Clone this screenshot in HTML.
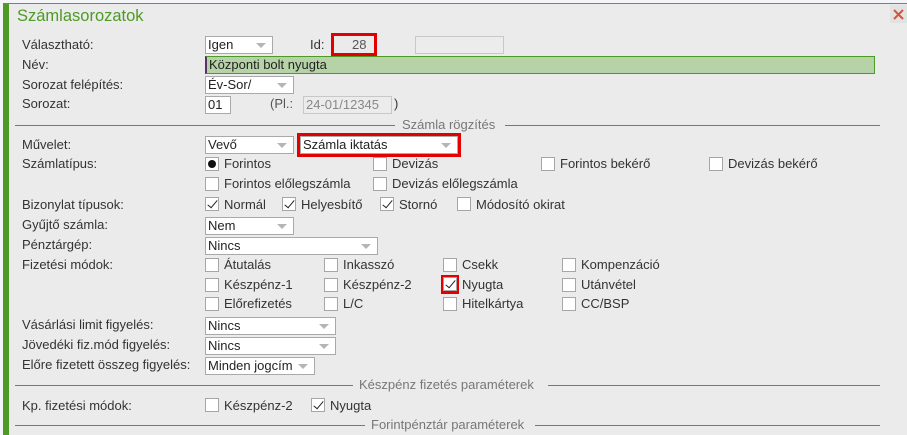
<!DOCTYPE html>
<html><head><meta charset="utf-8"><style>
*{margin:0;padding:0;box-sizing:border-box}
body{width:907px;height:435px;overflow:hidden;background:#f3f5f8;font-family:"Liberation Sans",sans-serif;font-size:13px;color:#333;position:relative}
#p{position:absolute;left:3px;top:3px;width:904px;height:432px;background:#ebebeb;border-top:1px solid #5a9e32;border-left:6px solid #4e9a26}
.a{position:absolute;white-space:nowrap}
.sel,.inp{position:absolute;background:#fff;border:1px solid #a9a9a9;line-height:16px;padding-left:2px;font-size:13px;color:#222;white-space:nowrap}
.sel:after{content:"";position:absolute;right:6px;top:6px;border-left:5px solid transparent;border-right:5px solid transparent;border-top:5px solid #b5b5b5}
.cb{position:absolute;width:14px;height:14px;background:#fff;border:1px solid #a6a6a6}
.cb.c:after{content:"";position:absolute;left:4px;top:0px;width:4px;height:9px;border-right:1.5px solid #222;border-bottom:1.5px solid #222;transform:rotate(40deg)}
.lbl{position:absolute;line-height:14px;font-size:13px;color:#333;white-space:nowrap}
.hr{position:absolute;height:1px;background:#777}
.sep{position:absolute;color:#777;font-size:13px;line-height:14px;white-space:nowrap}
.red{position:absolute;border:3px solid #e30000}
</style></head><body>
<div id="p"></div>
<div class="a" style="left:17px;top:6px;font-size:16.5px;color:#4e9a26;line-height:20px">Számlasorozatok</div>
<div class="a" style="left:890px;top:5px;width:17px;height:18px;background:#e2e2e2"></div>
<svg class="a" style="left:893px;top:9px" width="11" height="11"><path d="M1 1L10 10M10 1L1 10" stroke="#d9533a" stroke-width="2"/></svg>

<div class="lbl" style="left:22px;top:38px">Választható:</div>
<div class="sel" style="left:205px;top:36px;width:68px;height:18px">Igen</div>
<div class="lbl" style="left:310px;top:38px">Id:</div>
<div class="red" style="left:331px;top:33px;width:46px;height:23px"></div>
<div class="lbl" style="left:352px;top:38px;color:#555">28</div>
<div class="inp" style="left:415px;top:36px;width:89px;height:18px;background:#ececec;border-color:#c8c8c8"></div>

<div class="lbl" style="left:22px;top:58px">Név:</div>
<div class="inp" style="left:205px;top:56px;width:670px;height:18px;background:#b5d3a7;border:1px solid #4e9a26;border-left:2px solid #553366">Központi bolt nyugta</div>

<div class="lbl" style="left:22px;top:78px">Sorozat felépítés:</div>
<div class="sel" style="left:205px;top:76px;width:89px;height:18px">Év-Sor/</div>

<div class="lbl" style="left:22px;top:97px">Sorozat:</div>
<div class="inp" style="left:205px;top:96px;width:26px;height:18px">01</div>
<div class="lbl" style="left:270px;top:97px;color:#555">(Pl.:</div>
<div class="inp" style="left:303px;top:96px;width:89px;height:18px;background:#ececec;border-color:#c8c8c8;color:#888">24-01/12345</div>
<div class="lbl" style="left:394px;top:97px">)</div>

<div class="hr" style="left:15px;top:125px;width:380px"></div>
<div class="sep" style="left:402px;top:118px">Számla rögzítés</div>
<div class="hr" style="left:505px;top:125px;width:375px"></div>

<div class="lbl" style="left:22px;top:138px">Művelet:</div>
<div class="sel" style="left:205px;top:136px;width:89px;height:18px">Vevő</div>
<div class="red" style="left:297px;top:133px;width:164px;height:24px"></div>
<div class="sel" style="left:300px;top:136px;width:158px;height:18px">Számla iktatás</div>

<div class="lbl" style="left:22px;top:157px">Számlatípus:</div>
<div class="cb" style="left:205px;top:157px"></div><div class="a" style="left:208px;top:160px;width:8px;height:8px;border-radius:50%;background:#111"></div><div class="lbl" style="left:224px;top:157px">Forintos</div>
<div class="cb" style="left:373px;top:157px"></div><div class="lbl" style="left:392px;top:157px">Devizás</div>
<div class="cb" style="left:541px;top:157px"></div><div class="lbl" style="left:560px;top:157px">Forintos bekérő</div>
<div class="cb" style="left:709px;top:157px"></div><div class="lbl" style="left:728px;top:157px">Devizás bekérő</div>
<div class="cb" style="left:205px;top:177px"></div><div class="lbl" style="left:224px;top:177px">Forintos előlegszámla</div>
<div class="cb" style="left:373px;top:177px"></div><div class="lbl" style="left:392px;top:177px">Devizás előlegszámla</div>

<div class="lbl" style="left:22px;top:198px">Bizonylat típusok:</div>
<div class="cb c" style="left:205px;top:197px"></div><div class="lbl" style="left:224px;top:198px">Normál</div>
<div class="cb c" style="left:282px;top:197px"></div><div class="lbl" style="left:301px;top:198px">Helyesbítő</div>
<div class="cb c" style="left:380px;top:197px"></div><div class="lbl" style="left:399px;top:198px">Stornó</div>
<div class="cb" style="left:457px;top:197px"></div><div class="lbl" style="left:476px;top:198px">Módosító okirat</div>

<div class="lbl" style="left:22px;top:218px">Gyűjtő számla:</div>
<div class="sel" style="left:205px;top:217px;width:89px;height:18px">Nem</div>
<div class="lbl" style="left:22px;top:238px">Pénztárgép:</div>
<div class="sel" style="left:205px;top:237px;width:173px;height:18px">Nincs</div>

<div class="lbl" style="left:22px;top:258px">Fizetési módok:</div>
<div class="cb" style="left:205px;top:258px"></div><div class="lbl" style="left:224px;top:258px">Átutalás</div>
<div class="cb" style="left:324px;top:258px"></div><div class="lbl" style="left:343px;top:258px">Inkasszó</div>
<div class="cb" style="left:443px;top:258px"></div><div class="lbl" style="left:462px;top:258px">Csekk</div>
<div class="cb" style="left:562px;top:258px"></div><div class="lbl" style="left:581px;top:258px">Kompenzáció</div>
<div class="cb" style="left:205px;top:278px"></div><div class="lbl" style="left:224px;top:278px">Készpénz-1</div>
<div class="cb" style="left:324px;top:278px"></div><div class="lbl" style="left:343px;top:278px">Készpénz-2</div>
<div class="red" style="left:441px;top:275px;width:18px;height:19px"></div>
<div class="cb c" style="left:443px;top:277px"></div><div class="lbl" style="left:462px;top:278px">Nyugta</div>
<div class="cb" style="left:562px;top:278px"></div><div class="lbl" style="left:581px;top:278px">Utánvétel</div>
<div class="cb" style="left:205px;top:297px"></div><div class="lbl" style="left:224px;top:297px">Előrefizetés</div>
<div class="cb" style="left:324px;top:297px"></div><div class="lbl" style="left:343px;top:297px">L/C</div>
<div class="cb" style="left:443px;top:297px"></div><div class="lbl" style="left:462px;top:297px">Hitelkártya</div>
<div class="cb" style="left:562px;top:297px"></div><div class="lbl" style="left:581px;top:297px">CC/BSP</div>

<div class="lbl" style="left:22px;top:318px">Vásárlási limit figyelés:</div>
<div class="sel" style="left:205px;top:317px;width:131px;height:18px">Nincs</div>
<div class="lbl" style="left:22px;top:338px">Jövedéki fiz.mód figyelés:</div>
<div class="sel" style="left:205px;top:337px;width:131px;height:18px">Nincs</div>
<div class="lbl" style="left:22px;top:358px">Előre fizetett összeg figyelés:</div>
<div class="sel" style="left:205px;top:357px;width:110px;height:18px">Minden jogcím</div>

<div class="hr" style="left:15px;top:385px;width:338px"></div>
<div class="sep" style="left:359px;top:378px">Készpénz fizetés paraméterek</div>
<div class="hr" style="left:548px;top:385px;width:332px"></div>

<div class="lbl" style="left:22px;top:399px">Kp. fizetési módok:</div>
<div class="cb" style="left:205px;top:398px"></div><div class="lbl" style="left:224px;top:399px">Készpénz-2</div>
<div class="cb c" style="left:311px;top:398px"></div><div class="lbl" style="left:330px;top:399px">Nyugta</div>

<div class="hr" style="left:15px;top:425px;width:350px"></div>
<div class="sep" style="left:371px;top:418px">Forintpénztár paraméterek</div>
<div class="hr" style="left:535px;top:425px;width:345px"></div>
</body></html>
